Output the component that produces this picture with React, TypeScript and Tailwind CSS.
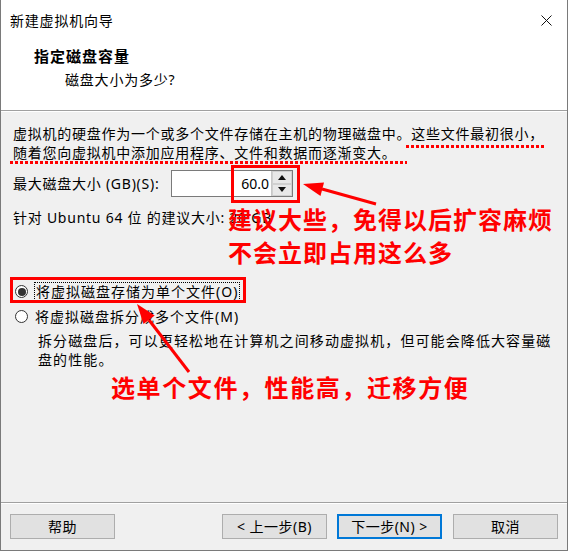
const FONT = "font-['Noto_Sans','Noto_Sans_CJK_SC',sans-serif]"

const Dots = ({ className }: { className: string }) => (
  <span className={`absolute h-[3px] bg-[linear-gradient(to_right,#ff0000_3px,transparent_3px)] bg-[length:5px_3px] bg-repeat-x ${className}`} />
)

function Spin() {
  return (
    <div className="flex h-[27px] w-[122px] border border-[#7a7a7a] bg-white">
      <div className="flex flex-1 items-center justify-end pr-[2px] text-[14px] tracking-normal">60.0</div>
      <div className="flex w-[21px] flex-col border-l border-[#c8c8c8]">
        <div className="flex flex-1 items-center justify-center border border-[#d0d0d0] bg-[#e8e8e8]">
          <svg width="8" height="5" viewBox="0 0 8 5"><path d="M0 5 L4 0 L8 5 Z" fill="#111" /></svg>
        </div>
        <div className="flex flex-1 items-center justify-center border border-[#d0d0d0] bg-[#e8e8e8]">
          <svg width="8" height="5" viewBox="0 0 8 5"><path d="M0 0 L4 5 L8 0 Z" fill="#111" /></svg>
        </div>
      </div>
    </div>
  )
}

function Radio({ checked }: { checked?: boolean }) {
  return (
    <span className="flex h-[13px] w-[13px] items-center justify-center rounded-full border border-[#333] bg-white">
      {checked && <span className="h-[8px] w-[8px] rounded-full bg-[#333]" />}
    </span>
  )
}

function Btn({ label, focused }: { label: string; focused?: boolean }) {
  return (
    <button className={`h-[25px] w-[105px] bg-[#e1e1e1] text-[14px] tracking-[0.5px] text-black ${focused ? 'border-2 border-[#0078d7]' : 'border border-[#adadad]'}`}>
      {label}
    </button>
  )
}

export default function App() {
  return (
    <div className="min-h-[551px] bg-white">
      <div className={`relative flex h-[551px] w-[568px] flex-col border-x border-b border-[#7a7a7a] text-black ${FONT}`}>
        <div className="h-[110px] bg-white">
          <div className="flex h-[40px] items-center justify-between pl-[9px] pr-[15px] text-[14px] tracking-[0.8px]">
            <span>新建虚拟机向导</span>
            <svg width="11" height="11" viewBox="0 0 11 11"><path d="M0.5 0.5 L10.5 10.5 M10.5 0.5 L0.5 10.5" stroke="#111" strokeWidth="1" /></svg>
          </div>
          <div className="pl-[33px] pt-[6px] text-[15px] font-bold leading-[20px] tracking-[1px]">指定磁盘容量</div>
          <div className="pl-[64px] pt-[4px] text-[14px] leading-[20px] tracking-[0.8px]">磁盘大小为多少?</div>
        </div>
        <div className="h-px bg-[#a0a0a0]" />
        <div className="h-px bg-white" />

        <div className="flex flex-1 flex-col bg-[#f0f0f0] pl-[12px] pt-[12px] text-[14px] leading-[19px] tracking-[0.75px]">
          <div className="whitespace-nowrap">
            虚拟机的硬盘作为一个或多个文件存储在主机的物理磁盘中。
            <span className="relative">
              这些文件最初很小，
              <Dots className="-left-[5px] -right-[2px] top-[21px]" />
            </span>
          </div>
          <div className="whitespace-nowrap">
            <span className="relative">
              随着您向虚拟机中添加应用程序、文件和数据而逐渐变大。
              <Dots className="-left-[3px] -right-[10px] top-[18px]" />
            </span>
          </div>

          <div className="mt-[8px] flex items-center">
            <span className="w-[158px]">最大磁盘大小 (GB)(S):</span>
            <Spin />
          </div>
          <div className="mt-[11px]">针对 Ubuntu 64 位 的建议大小: 20 GB</div>

          <div className="mt-[52px] flex h-[25px] items-center gap-[6px] pl-[2px]">
            <Radio checked />
            <span className="border border-dotted border-black px-[1px] leading-[17px] tracking-[1px]">将虚拟磁盘存储为单个文件(O)</span>
          </div>
          <div className="flex h-[25px] items-center gap-[7px] pl-[2px] tracking-[1px]">
            <Radio />
            <span>将虚拟磁盘拆分成多个文件(M)</span>
          </div>
          <div className="mt-[2px] pl-[25px] tracking-[1.1px]">
            拆分磁盘后，可以更轻松地在计算机之间移动虚拟机，但可能会降低大容量磁
            <br />
            盘的性能。
          </div>
        </div>

        <div className="h-px bg-[#a0a0a0]" />
        <div className="h-px bg-white" />
        <div className="flex h-[46px] items-start bg-[#f0f0f0] pl-[9px] pr-[9px] pt-[10px]">
          <Btn label="帮助" />
          <div className="flex-1" />
          <div className="flex gap-[11px]">
            <div className="flex gap-[10px]">
              <Btn label="< 上一步(B)" />
              <Btn label="下一步(N) >" focused />
            </div>
            <Btn label="取消" />
          </div>
        </div>

        {/* annotations */}
        <div className="absolute left-[230px] top-[165px] h-[38px] w-[69px] border-[3px] border-[#ff0000]" />
        <div className="absolute left-[9px] top-[277px] h-[26px] w-[236px] border-[3px] border-[#ff0000]" />
        <div className="absolute left-[227px] top-[206px] text-[24px] font-bold leading-[28px] tracking-[1px] text-[#ff0000]">
          建议大些，免得以后扩容麻烦
          <br />
          <span className="relative top-[5px]">不会立即占用这么多</span>
        </div>
        <div className="absolute left-[110px] top-[374px] text-[24px] font-bold leading-[28px] tracking-[1.6px] text-[#ff0000]">
          选单个文件，性能高，迁移方便
        </div>
        <svg className="pointer-events-none absolute left-0 top-0" width="568" height="551">
          <line x1="375" y1="204" x2="321" y2="189" stroke="#ff0000" strokeWidth="3" />
          <polygon points="302,184 323,182.5 319.5,196" fill="#ff0000" />
          <line x1="188" y1="372" x2="148" y2="320" stroke="#ff0000" strokeWidth="3" />
          <polygon points="136,304 153.7,315.6 142.5,324.1" fill="#ff0000" />
        </svg>
      </div>
    </div>
  )
}
